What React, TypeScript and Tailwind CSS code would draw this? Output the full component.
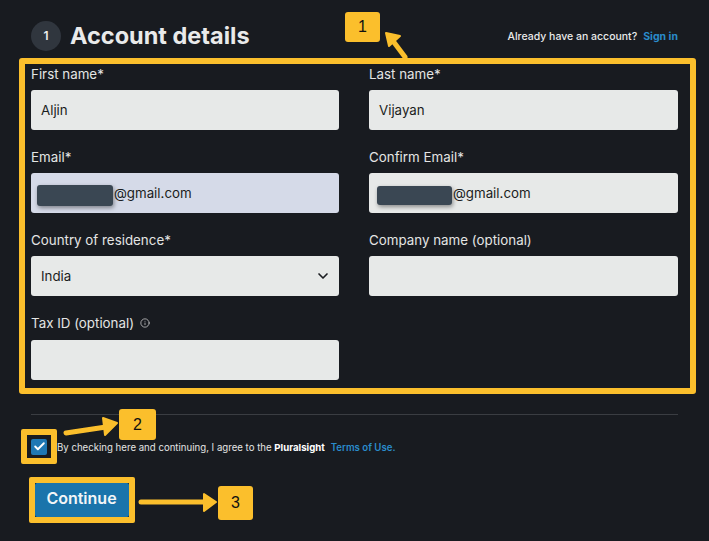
import React from "react";
import { Check, ChevronDown, Info } from "lucide-react";

const Y = "#fbbf2c";

function Label({ children, className = "mb-[6px]" }: { children: React.ReactNode; className?: string }) {
  return <div className={`h-5 text-[13.35px] leading-5 text-[#e4e5e4] flex items-center gap-[6px] ${className}`}>{children}</div>;
}

function Box({ children, className = "bg-[#e7e9e8]" }: { children?: React.ReactNode; className?: string }) {
  return <div className={`h-10 pt-[2px] rounded-[3px] flex items-center text-[13.3px] text-[#1b1d21] ${className}`}>{children}</div>;
}

function Redacted({ className, blob }: { className: string; blob: string }) {
  return (
    <Box className={className}>
      <span className={`rounded-[3px] bg-[#3a4753] shadow-[1px_2px_4px_rgba(0,0,0,0.4)] mr-px mt-[2px] ${blob}`} />
      <span>@gmail.com</span>
    </Box>
  );
}

function Badge({ n, className }: { n: string; className: string }) {
  return (
    <div className={`absolute flex items-center justify-center rounded-[3px] bg-[#fbbf2c] text-[16px] text-[#111] font-['Liberation_Sans',sans-serif] ${className}`}>
      {n}
    </div>
  );
}

export default function App() {
  return (
    <div className="relative w-[709px] h-[541px] overflow-hidden bg-[#181b20] font-['Inter',sans-serif]">
      <header className="h-[58px] pl-[31px] pr-[31px] pt-[21px] flex justify-between items-start">
        <div className="flex items-center gap-[9px] h-[30px]">
          <span className="w-[30px] h-[30px] rounded-full bg-[#30363e] flex items-center justify-center text-[12px] font-semibold text-[#eee]">1</span>
          <h1 className="text-[23.5px] leading-[30px] font-bold text-[#e9eaea]">Account details</h1>
        </div>
        <p className="text-[10.5px] leading-[32px] font-medium text-[#e9eaea]">
          Already have an account?
          <span className="ml-[6px] font-bold text-[#2a8ccb]">Sign in</span>
        </p>
      </header>

      <section className="ml-[19px] w-[677px] h-[336px] border-[6px] border-[#fbbf2c] rounded-[3px] pl-[6px] pr-[12px] grid grid-cols-[308px_309px] gap-x-[30px] gap-y-[17px] content-start">
        <div>
          <Label>First name*</Label>
          <Box className="bg-[#e7e9e8] px-[10px]">Aljin</Box>
        </div>
        <div>
          <Label>Last name*</Label>
          <Box className="bg-[#e7e9e8] px-[10px]">Vijayan</Box>
        </div>
        <div>
          <Label>Email*</Label>
          <Redacted className="bg-[#d5dae8] pl-[6px]" blob="w-[76px] h-[21px]" />
        </div>
        <div>
          <Label>Confirm Email*</Label>
          <Redacted className="bg-[#e7e9e8] pl-[8px]" blob="w-[75px] h-[19px]" />
        </div>
        <div>
          <Label>Country of residence*</Label>
          <Box className="bg-[#e7e9e8] pl-[10px] pr-[8px] justify-between">
            <span>India</span>
            <ChevronDown size={16} strokeWidth={2.5} className="text-[#1b1d21] -mt-[2px]" />
          </Box>
        </div>
        <div>
          <Label>Company name (optional)</Label>
          <Box />
        </div>
        <div>
          <Label className="mb-[7px]">
            Tax ID (optional)
            <Info size={10} strokeWidth={1.75} className="text-[#d5d6d6]" />
          </Label>
          <Box />
        </div>
      </section>

      <hr className="mt-5 ml-[31px] w-[647px] h-px border-0 bg-[#3a3d42]" />

      <div className="mt-[14px] ml-[21px] flex items-center h-[35px]">
        <div className="w-[36px] h-[35px] border-[6px] border-[#fbbf2c] rounded-[2px] flex items-center justify-center bg-[#181b20]">
          <span className="w-4 h-4 rounded-[2px] bg-[#1f78b4] flex items-center justify-center">
            <Check size={13} strokeWidth={3.5} className="text-white" />
          </span>
        </div>
        <p className="mt-[3px] text-[9.65px] font-normal text-[#e4e5e4] whitespace-nowrap">
          By checking here and continuing, I agree to the <strong className="font-bold text-white">Pluralsight</strong>
          <span className="ml-[6px] font-semibold text-[#2a8ccb]">Terms of Use.</span>
        </p>
      </div>

      <div className="mt-[13px] ml-[29px] w-[106px] h-[46px] border-[6px] border-[#fbbf2c] rounded-[2px]">
        <button className="w-full h-full pb-[4px] pr-[1px] bg-[#1a74ab] rounded-[2px] text-[16px] font-semibold text-[#f2f5f7]">Continue</button>
      </div>

      <Badge n="1" className="left-[345px] top-[12px] w-[35px] h-[30px]" />
      <Badge n="2" className="left-[119px] top-[409px] w-[37px] h-[31px]" />
      <Badge n="3" className="left-[218px] top-[486px] w-[35px] h-[34px]" />

      <svg className="absolute inset-0 pointer-events-none" width="709" height="541" viewBox="0 0 709 541" fill="none" stroke={Y} strokeLinecap="round" strokeLinejoin="round">
        <path d="M405 57 L390 37" strokeWidth="5" />
        <path d="M386 33 L400 36 L389 46 Z" fill={Y} strokeWidth="2" />
        <path d="M66 433 L106 427" strokeWidth="5" />
        <path d="M117 423 L103 418 L105 435 Z" fill={Y} strokeWidth="2" />
        <path d="M141 502 L204 502" strokeWidth="5" />
        <path d="M216 502 L204 494 L204 511 Z" fill={Y} strokeWidth="2" />
      </svg>
    </div>
  );
}
